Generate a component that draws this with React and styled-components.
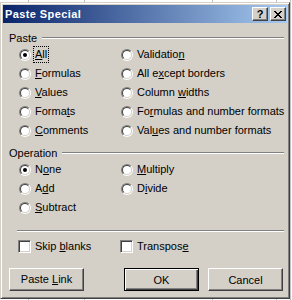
import React from "react";
import styled, { createGlobalStyle } from "styled-components";

const GlobalStyle = createGlobalStyle`
  html, body {
    margin: 0;
    padding: 0;
    background-color: #ffffff;
    background-image:
      linear-gradient(#c0c0c0, #c0c0c0),
      linear-gradient(#c0c0c0, #c0c0c0),
      linear-gradient(#c0c0c0, #c0c0c0),
      linear-gradient(#c0c0c0, #c0c0c0),
      linear-gradient(#c0c0c0, #c0c0c0);
    background-size: 1px 100%;
    background-repeat: no-repeat;
    background-position: 28px 0, 84px 0, 212px 0, 276px 0, 290px 0;
    height: 300px;
    overflow: hidden;
  }
`;

const face = "#d4d0c8";

const Window = styled.div`
  box-sizing: border-box;
  width: 290px;
  height: 297px;
  margin-top: 2px;
  background: ${face};
  border: 1px solid;
  border-color: ${face} #404040 #404040 ${face};
  box-shadow: inset 1px 1px #ffffff, inset -1px -1px #808080;
  padding: 2px;
  display: flex;
  flex-direction: column;
  font-family: "Liberation Sans", Arial, sans-serif;
  font-size: 11px;
  color: #000;
`;

const TitleBar = styled.div`
  height: 18px;
  display: flex;
  align-items: center;
  padding: 0 1px 0 2px;
  background: linear-gradient(to right, #0a246a, #a6caf0);
`;

const Title = styled.span`
  flex: 1;
  color: #ffffff;
  font-weight: bold;
  font-size: 11px;
  letter-spacing: 0.4px;
`;

const CaptionButton = styled.button`
  box-sizing: border-box;
  width: 16px;
  height: 14px;
  margin-left: ${(p) => (p.$gap ? "2px" : "0")};
  padding: 0;
  background: ${face};
  border: 1px solid;
  border-color: #ffffff #404040 #404040 #ffffff;
  box-shadow: inset -1px -1px #808080;
  display: flex;
  align-items: center;
  justify-content: center;
  font-family: "Liberation Sans", Arial, sans-serif;
  font-weight: bold;
  font-size: 11px;
  line-height: 1;
  color: #000;
`;

const Body = styled.div`
  flex: 1;
  display: flex;
  flex-direction: column;
  padding: 8px 3px 0 6px;
`;

const GroupHeader = styled.div`
  display: flex;
  align-items: center;
  height: 14px;
  gap: 5px;
  margin-top: ${(p) => p.$top || 0}px;
`;

const HeaderLine = styled.div`
  flex: 1;
  height: 0;
  border-top: 1px solid #808080;
  border-bottom: 1px solid #ffffff;
`;

const Separator = styled.div`
  height: 0;
  border-top: 1px solid #808080;
  border-bottom: 1px solid #ffffff;
  margin: 13px 0 0 8px;
`;

const OptionGrid = styled.div`
  display: grid;
  grid-template-columns: 102px 1fr;
  grid-auto-rows: ${(p) => p.$row}px;
  margin-left: ${(p) => p.$left}px;
  margin-top: ${(p) => p.$top || 0}px;
`;

const Option = styled.label`
  display: flex;
  align-items: center;
  gap: 4px;
  white-space: nowrap;
`;

const Radio = styled.span`
  position: relative;
  box-sizing: border-box;
  width: 12px;
  height: 12px;
  border-radius: 50%;
  border: 1px solid;
  border-color: #808080 #ffffff #ffffff #808080;
  flex: none;
  &::before {
    content: "";
    position: absolute;
    inset: 0;
    border-radius: 50%;
    border: 1px solid;
    border-color: #404040 ${face} ${face} #404040;
    background: #ffffff;
  }
  &::after {
    content: "";
    display: ${(p) => (p.$checked ? "block" : "none")};
    position: absolute;
    left: 3px;
    top: 3px;
    width: 4px;
    height: 4px;
    border-radius: 50%;
    background: #000;
  }
`;

const Check = styled.span`
  box-sizing: border-box;
  width: 13px;
  height: 13px;
  border: 1px solid;
  border-color: #808080 #ffffff #ffffff #808080;
  box-shadow: inset 1px 1px #404040, inset -1px -1px ${face};
  background: #ffffff;
  flex: none;
`;

const Text = styled.span`
  line-height: 13px;
  outline: ${(p) => (p.$focus ? "1px dotted #000" : "none")};
  outline-offset: 1px;
`;

const ButtonRow = styled.div`
  display: flex;
  margin-top: 15px;
`;

const PushButton = styled.button`
  box-sizing: border-box;
  width: 75px;
  height: 23px;
  margin-left: ${(p) => p.$left || 0}px;
  padding: 0;
  background: ${face};
  font-family: "Liberation Sans", Arial, sans-serif;
  font-size: 11px;
  color: #000;
  border: 1px solid;
  border-color: ${(p) =>
    p.$default ? "#000" : "#ffffff #404040 #404040 #ffffff"};
  box-shadow: ${(p) =>
    p.$default
      ? "inset 1px 1px #ffffff, inset -1px -1px #404040, inset -2px -2px #808080"
      : "inset -1px -1px #808080"};
`;

const CloseGlyph = () => (
  <svg width="8" height="7" viewBox="0 0 8 7" shapeRendering="crispEdges">
    <path
      d="M0 0h2v1h-2zM6 0h2v1h-2zM1 1h2v1h-2zM5 1h2v1h-2zM2 2h4v1h-4zM3 3h2v1h-2zM2 4h4v1h-4zM1 5h2v1h-2zM5 5h2v1h-2zM0 6h2v1h-2zM6 6h2v1h-2z"
      fill="#000"
    />
  </svg>
);

const Label = ({ text, k, focus }) => {
  const i = k === undefined ? -1 : k;
  return (
    <Text $focus={focus}>
      {i < 0 ? (
        text
      ) : (
        <>
          {text.slice(0, i)}
          <u>{text[i]}</u>
          {text.slice(i + 1)}
        </>
      )}
    </Text>
  );
};

// two columns, listed row by row
const pasteOptions = [
  ["All", 0, true],
  ["Validation", 9],
  ["Formulas", 0],
  ["All except borders", 5],
  ["Values", 0],
  ["Column widths", 7],
  ["Formats", 5],
  ["Formulas and number formats", 2],
  ["Comments", 0],
  ["Values and number formats", 3],
];

const operationOptions = [
  ["None", 1, true],
  ["Multiply", 0],
  ["Add", 1],
  ["Divide", 1],
  ["Subtract", 0],
];

export default function App() {
  return (
    <>
      <GlobalStyle />
      <Window>
        <TitleBar>
          <Title>Paste Special</Title>
          <CaptionButton>?</CaptionButton>
          <CaptionButton $gap>
            <CloseGlyph />
          </CaptionButton>
        </TitleBar>
        <Body>
          <GroupHeader>
            <span>Paste</span>
            <HeaderLine />
          </GroupHeader>
          <OptionGrid $row={19} $left={10}>
            {pasteOptions.map(([t, k, on]) => (
              <Option key={t}>
                <Radio $checked={on} />
                <Label text={t} k={k} focus={t === "All"} />
              </Option>
            ))}
          </OptionGrid>
          <GroupHeader $top={6}>
            <span>Operation</span>
            <HeaderLine />
          </GroupHeader>
          <OptionGrid $row={19} $left={10}>
            {operationOptions.map(([t, k, on]) => (
              <Option key={t}>
                <Radio $checked={on} />
                <Label text={t} k={k} />
              </Option>
            ))}
          </OptionGrid>
          <Separator />
          <OptionGrid $row={13} $left={9} $top={8}>
            <Option>
              <Check />
              <Label text="Skip blanks" k={5} />
            </Option>
            <Option>
              <Check />
              <Label text="Transpose" k={8} />
            </Option>
          </OptionGrid>
          <ButtonRow>
            <PushButton>
              <Label text="Paste Link" k={6} />
            </PushButton>
            <PushButton $default $left={40}>
              OK
            </PushButton>
            <PushButton $left={9}>Cancel</PushButton>
          </ButtonRow>
        </Body>
      </Window>
    </>
  );
}
